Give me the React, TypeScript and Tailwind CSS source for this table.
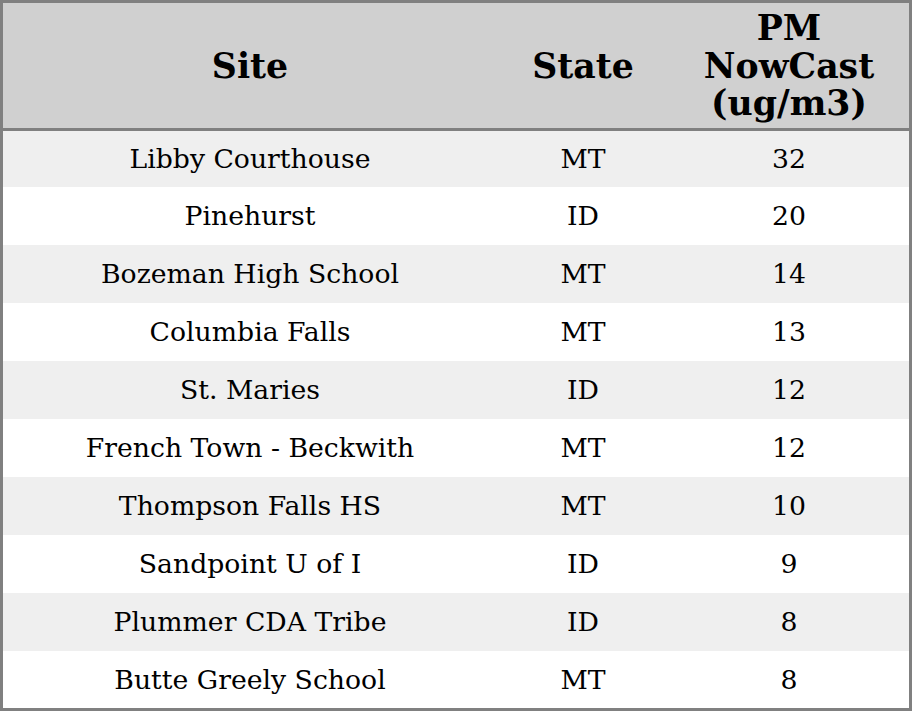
import React from "react";

const rows: [string, string, string][] = [
  ["Libby Courthouse", "MT", "32"],
  ["Pinehurst", "ID", "20"],
  ["Bozeman High School", "MT", "14"],
  ["Columbia Falls", "MT", "13"],
  ["St. Maries", "ID", "12"],
  ["French Town - Beckwith", "MT", "12"],
  ["Thompson Falls HS", "MT", "10"],
  ["Sandpoint U of I", "ID", "9"],
  ["Plummer CDA Tribe", "ID", "8"],
  ["Butte Greely School", "MT", "8"],
];

export default function App() {
  return (
    <div className="w-[912px] h-[711px] bg-white" style={{ fontFamily: '"DejaVu Serif", serif' }}>
      <table className="w-[912px] border-[3px] border-[#808080] border-separate border-spacing-0 text-black table-fixed">
        <colgroup>
          <col className="w-[494px]" />
          <col className="w-[172px]" />
          <col className="w-[240px]" />
        </colgroup>
        <thead>
          <tr className="bg-[#d0d0d0]">
            <th className="text-[34.7px] leading-[37.5px] font-bold h-[128px] p-0 text-center border-b-[3px] border-[#808080]">Site</th>
            <th className="text-[34.7px] leading-[37.5px] font-bold h-[128px] p-0 text-center border-b-[3px] border-[#808080]">State</th>
            <th className="text-[34.7px] leading-[37.5px] font-bold h-[128px] p-0 text-center border-b-[3px] border-[#808080]">
              PM<br />NowCast<br />(ug/m3)
            </th>
          </tr>
        </thead>
        <tbody>
          {rows.map((r, i) => (
            <tr
              key={i}
              className={`${i % 2 === 0 ? "bg-[#efefef]" : "bg-white"} ${
                i === 0 ? "h-[56px]" : i === rows.length - 1 ? "h-[57px]" : "h-[58px]"
              }`}
            >
              <td className="text-[26.7px] leading-[30px] p-0 text-center">{r[0]}</td>
              <td className="text-[26.7px] leading-[30px] p-0 text-center">{r[1]}</td>
              <td className="text-[26.7px] leading-[30px] p-0 text-center">{r[2]}</td>
            </tr>
          ))}
        </tbody>
      </table>
    </div>
  );
}
